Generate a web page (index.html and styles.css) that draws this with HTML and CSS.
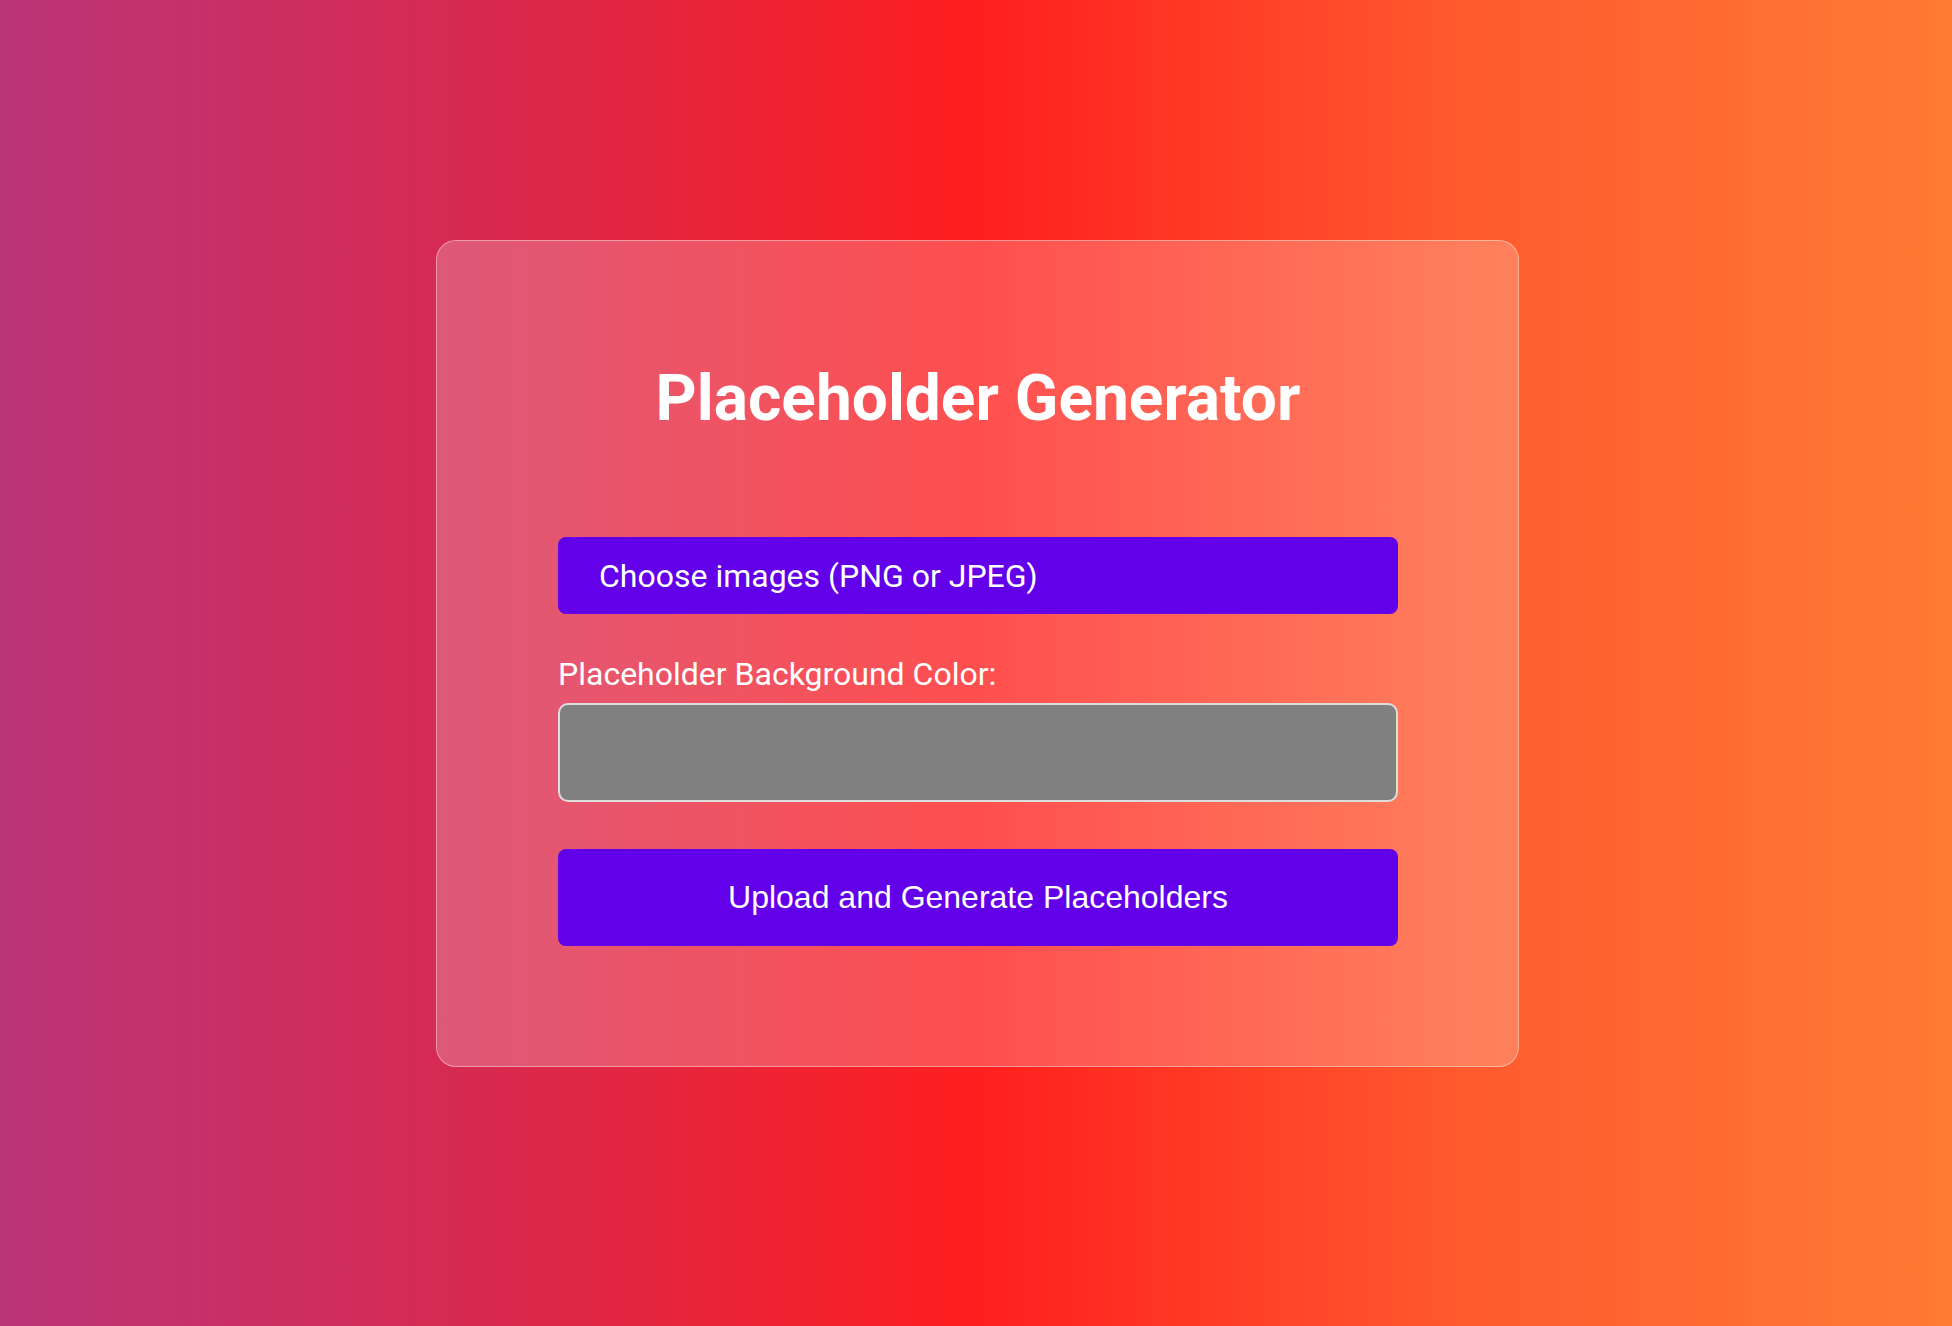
FILE: index.html
```html
<!DOCTYPE html>
<html lang="en">
<head>
<meta charset="utf-8">
<title>Placeholder Generator</title>
<link rel="stylesheet" href="styles.css">
</head>
<body>
  <main class="card">
    <h1 class="title">Placeholder Generator</h1>
    <form class="form">
      <label class="file-btn">Choose images (PNG or JPEG)</label>
      <label class="field-label">Placeholder Background Color:</label>
      <div class="color-field"></div>
      <button type="button" class="submit-btn">Upload and Generate Placeholders</button>
    </form>
  </main>
</body>
</html>
```

FILE: styles.css
```css
* { box-sizing: border-box; }
html, body { margin: 0; height: 100%; }
body {
  min-height: 1326px;
  background: linear-gradient(to right, #bb3579 0%, #d8294f 25%, #ff1e1e 50%, #ff5a2e 75%, #ff7b35 100%);
  font-family: Roboto, "Liberation Sans", sans-serif;
  color: #fff;
  display: flex;
  justify-content: center;
  align-items: flex-start;
}
.card {
  margin-top: 240px;
  margin-left: 3px;
  width: 1083px;
  height: 827px;
  border: 1px solid rgba(255,255,255,0.4);
  border-radius: 20px;
  background: rgba(255,255,255,0.22);
  padding: 120px 120px 0 121px;
}
.title {
  margin: 0;
  text-align: center;
  font-size: 64px;
  font-weight: 700;
  line-height: 75px;
}
.form { display: flex; flex-direction: column; margin-top: 101px; }
.file-btn {
  height: 77px;
  background: #6200ea;
  border-radius: 8px;
  padding-left: 41px;
  display: flex;
  align-items: center;
  font-size: 32px;
}
.field-label { margin-top: 42px; font-size: 32px; line-height: 37px; }
.color-field {
  margin-top: 10px;
  height: 99px;
  border: 2px solid #ddd;
  border-radius: 10px;
  background: #808080;
}
.submit-btn {
  margin-top: 47px;
  height: 97px;
  border: none;
  border-radius: 8px;
  background: #6200ea;
  color: #fff;
  font-family: "Liberation Sans", Arial, sans-serif;
  font-size: 32px;
}
```
